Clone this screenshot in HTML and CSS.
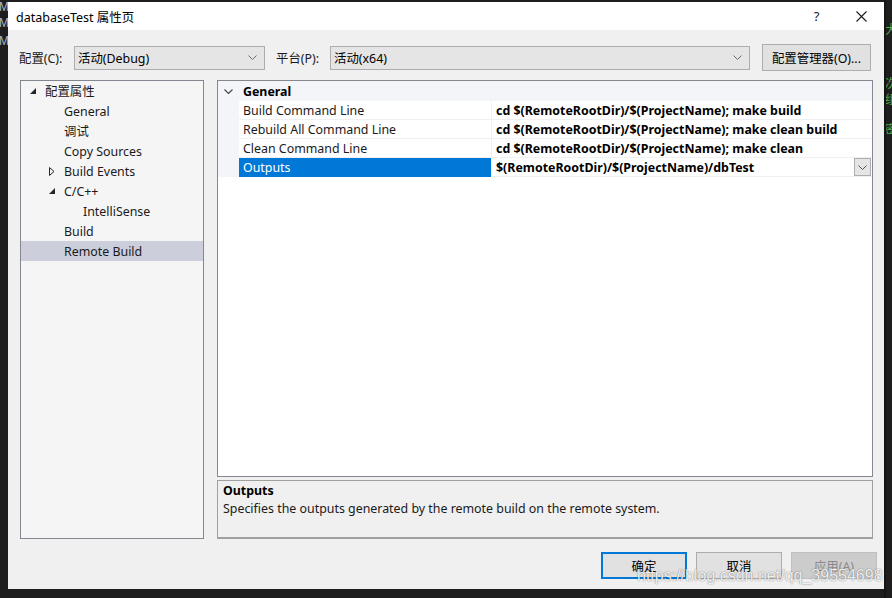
FILE: index.html
```html
<!DOCTYPE html>
<html lang="zh-CN">
<head>
<meta charset="utf-8">
<title>databaseTest 属性页</title>
<link rel="stylesheet" href="styles.css">
</head>
<body>
<div class="screen">
  <div class="edge edge-left">
    <span class="code-line l1">My</span>
    <span class="code-line l2">My</span>
    <span class="code-line l3">My</span>
  </div>

  <div class="dialog">
    <div class="titlebar">
      <span class="title">databaseTest 属性页</span>
      <div class="title-buttons">
        <span class="tbtn help">?</span>
        <span class="tbtn close">
          <svg width="11" height="11" viewBox="0 0 11 11"><path d="M0.5 0.5 L10.5 10.5 M10.5 0.5 L0.5 10.5" stroke="#1a1a1a" stroke-width="1.1" fill="none"/></svg>
        </span>
      </div>
    </div>

    <div class="body">
      <div class="config-row">
        <span class="label label-config">配置(C):</span>
        <div class="combo combo-config">
          <span>活动(Debug)</span>
          <svg class="chev" width="9" height="5" viewBox="0 0 9 5"><path d="M0.5 0.5 L4.5 4.5 L8.5 0.5" stroke="#6d6d6d" fill="none"/></svg>
        </div>
        <span class="label label-platform">平台(P):</span>
        <div class="combo combo-platform">
          <span>活动(x64)</span>
          <svg class="chev" width="9" height="5" viewBox="0 0 9 5"><path d="M0.5 0.5 L4.5 4.5 L8.5 0.5" stroke="#6d6d6d" fill="none"/></svg>
        </div>
        <div class="btn btn-manager">配置管理器(O)...</div>
      </div>

      <div class="main">
        <div class="tree">
          <div class="node lvl0">
            <span class="exp"><svg width="6" height="6" viewBox="0 0 6 6"><path d="M6 0 L6 6 L0 6 Z" fill="#262626"/></svg></span>
            <span>配置属性</span>
          </div>
          <div class="node lvl1"><span class="exp"></span><span>General</span></div>
          <div class="node lvl1"><span class="exp"></span><span>调试</span></div>
          <div class="node lvl1"><span class="exp"></span><span>Copy Sources</span></div>
          <div class="node lvl1">
            <span class="exp"><svg width="6" height="9" viewBox="0 0 6 9"><path d="M0.5 0.5 L5 4.5 L0.5 8.5 Z" stroke="#262626" fill="none"/></svg></span>
            <span>Build Events</span>
          </div>
          <div class="node lvl1">
            <span class="exp"><svg width="6" height="6" viewBox="0 0 6 6"><path d="M6 0 L6 6 L0 6 Z" fill="#262626"/></svg></span>
            <span>C/C++</span>
          </div>
          <div class="node lvl2"><span class="exp"></span><span>IntelliSense</span></div>
          <div class="node lvl1"><span class="exp"></span><span>Build</span></div>
          <div class="node lvl1 selected"><span class="exp"></span><span>Remote Build</span></div>
        </div>

        <div class="right-col">
          <div class="grid">
            <div class="grid-header">
              <span class="gutter">
                <svg width="9" height="5" viewBox="0 0 9 5"><path d="M0.5 0.5 L4.5 4.5 L8.5 0.5" stroke="#444" stroke-width="1.1" fill="none"/></svg>
              </span>
              <span class="cat">General</span>
            </div>
            <div class="grow">
              <span class="gutter"></span>
              <span class="name">Build Command Line</span>
              <span class="value">cd $(RemoteRootDir)/$(ProjectName); make build</span>
            </div>
            <div class="grow">
              <span class="gutter"></span>
              <span class="name">Rebuild All Command Line</span>
              <span class="value">cd $(RemoteRootDir)/$(ProjectName); make clean build</span>
            </div>
            <div class="grow">
              <span class="gutter"></span>
              <span class="name">Clean Command Line</span>
              <span class="value">cd $(RemoteRootDir)/$(ProjectName); make clean</span>
            </div>
            <div class="grow active">
              <span class="gutter"></span>
              <span class="name">Outputs</span>
              <span class="value">
                <span class="value-text">$(RemoteRootDir)/$(ProjectName)/dbTest</span>
                <span class="drop">
                  <svg width="9" height="5" viewBox="0 0 9 5"><path d="M0.5 0.5 L4.5 4.5 L8.5 0.5" stroke="#555" fill="none"/></svg>
                </span>
              </span>
            </div>
          </div>

          <div class="desc">
            <div class="desc-title">Outputs</div>
            <div class="desc-text">Specifies the outputs generated by the remote build on the remote system.</div>
          </div>
        </div>
      </div>

      <div class="buttons">
        <div class="btn btn-ok">确定</div>
        <div class="btn">取消</div>
        <div class="btn btn-disabled">应用(A)</div>
      </div>

      <div class="watermark">https://blog.csdn.net/qq_39554698</div>
    </div>
  </div>

  <div class="edge edge-right">
    <span class="green g1">大</span>
    <span class="green g2">次</span>
    <span class="green g3">组</span>
    <span class="green g4">密</span>
  </div>
</div>
</body>
</html>
```

FILE: styles.css
```css
* { box-sizing: border-box; }

html, body {
  margin: 0;
  padding: 0;
}

body {
  width: 892px;
  height: 598px;
  overflow: hidden;
  background: #1e1e1e;
  font-family: "Noto Sans", "Noto Sans CJK SC", sans-serif;
  font-size: 12.4px;
  color: #1a1a1a;
}

.screen {
  display: flex;
  width: 892px;
  height: 598px;
}

.edge {
  width: 8px;
  height: 598px;
  overflow: hidden;
  background: #1e1e1e;
  display: flex;
  flex-direction: column;
}

.code-line {
  font-family: "Liberation Sans", sans-serif;
  font-size: 12px;
  line-height: 14px;
  color: #b8b8b8;
  white-space: nowrap;
  margin-left: -1px;
}
.l1 { margin-top: 0; }
.l2 { margin-top: 2px; }
.l3 { margin-top: 4px; }

.edge-right {
  border-left: 2px solid #151515;
}

.green {
  font-family: "Noto Sans CJK SC", sans-serif;
  font-size: 12px;
  line-height: 14px;
  color: #4fa84a;
  margin-left: -1px;
  white-space: nowrap;
}
.g1 { margin-top: 22px; }
.g2 { margin-top: 40px; }
.g3 { margin-top: 2px; }
.g4 { margin-top: 16px; }

.dialog {
  width: 876px;
  height: 587px;
  margin-top: 2px;
  background: #f0f0f0;
  display: flex;
  flex-direction: column;
}

.titlebar {
  height: 28px;
  background: #ffffff;
  display: flex;
  align-items: center;
  padding-left: 8px;
}

.title {
  font-size: 12.5px;
  color: #000;
}

.title-buttons {
  margin-left: auto;
  display: flex;
  height: 28px;
}

.tbtn {
  width: 45px;
  height: 28px;
  display: flex;
  align-items: center;
  justify-content: center;
}

.help {
  font-size: 13px;
  color: #1a1a1a;
}

.body {
  position: relative;
  flex: 1;
  display: flex;
  flex-direction: column;
}

.config-row {
  margin-top: 14px;
  height: 27px;
  display: flex;
  align-items: center;
}

.label { color: #1a1a1a; }
.label-config { margin-left: 11px; width: 55px; }
.label-platform { margin-left: 11px; width: 54px; }

.combo {
  height: 24px;
  background: #e5e5e5;
  border: 1px solid #adadad;
  display: flex;
  align-items: center;
  padding-left: 3px;
  padding-right: 7px;
  color: #000;
}
.combo .chev { margin-left: auto; }
.combo-config { width: 191px; }
.combo-platform { width: 420px; }

.btn {
  width: 86px;
  height: 27px;
  background: #e1e1e1;
  border: 1px solid #adadad;
  display: flex;
  align-items: center;
  justify-content: center;
  color: #000;
}

.btn-manager {
  width: 109px;
  margin-left: 12px;
}

.main {
  margin-top: 9px;
  height: 459px;
  display: flex;
  padding-left: 12px;
  gap: 13px;
}

.tree {
  width: 184px;
  height: 459px;
  background: #f5f5f5;
  border: 1px solid #828790;
}

.node {
  height: 20px;
  display: flex;
  align-items: center;
  color: #1a1a1a;
}

.exp {
  width: 15px;
  flex: none;
  display: flex;
  align-items: center;
  justify-content: flex-start;
}

.lvl0 { padding-left: 9px; }
.lvl1 { padding-left: 28px; }
.lvl2 { padding-left: 47px; }

.selected { background: #cccedb; }

.right-col {
  width: 656px;
  display: flex;
  flex-direction: column;
  gap: 3px;
}

.grid {
  height: 397px;
  background: #ffffff;
  border: 1px solid #828790;
}

.grid-header {
  height: 20px;
  display: flex;
  align-items: center;
  background: #f3f5f9;
}

.gutter {
  width: 21px;
  align-self: stretch;
  display: flex;
  align-items: center;
  justify-content: center;
  background: #f3f5f9;
  flex: none;
}

.cat {
  padding-left: 4px;
  font-weight: 700;
  color: #000;
}

.grow {
  height: 19px;
  display: flex;
  align-items: stretch;
}

.name {
  width: 252px;
  flex: none;
  padding-left: 4px;
  display: flex;
  align-items: center;
  border-bottom: 1px solid #f0f0f0;
  color: #1a1a1a;
}

.value {
  flex: 1;
  display: flex;
  align-items: center;
  padding-left: 4px;
  font-weight: 700;
  color: #000;
  border-bottom: 1px solid #f0f0f0;
  border-left: 1px solid #f0f0f0;
}

.active .name {
  background: #0078d7;
  color: #ffffff;
  border-bottom-color: #0078d7;
}

.value-text { flex: 1; }

.drop {
  width: 17px;
  height: 18px;
  margin-right: 1px;
  background: #e5e5e5;
  border: 1px solid #adadad;
  display: flex;
  align-items: center;
  justify-content: center;
}

.desc {
  height: 59px;
  background: #f0f0f0;
  border: 1px solid #a0a0a0;
  border-bottom-width: 2px;
  padding: 1px 5px 0;
}

.desc-title {
  font-weight: 700;
  color: #000;
  line-height: 18px;
}

.desc-text {
  line-height: 18px;
  color: #1a1a1a;
}

.buttons {
  margin-top: 13px;
  display: flex;
  justify-content: flex-end;
  gap: 9px;
  padding-right: 7px;
}

.btn-ok {
  border: 2px solid #0078d7;
}

.btn-disabled {
  background: #cccccc;
  border-color: #bfbfbf;
  color: #8a8a8a;
}

.watermark {
  position: absolute;
  left: 629px;
  top: 537px;
  font-family: "Liberation Sans", sans-serif;
  font-size: 16px;
  color: rgba(255, 255, 255, 0.9);
  text-shadow: 0 0 1px rgba(0, 0, 0, 0.45), 0 0 2px rgba(0, 0, 0, 0.2);
  white-space: nowrap;
}
```
